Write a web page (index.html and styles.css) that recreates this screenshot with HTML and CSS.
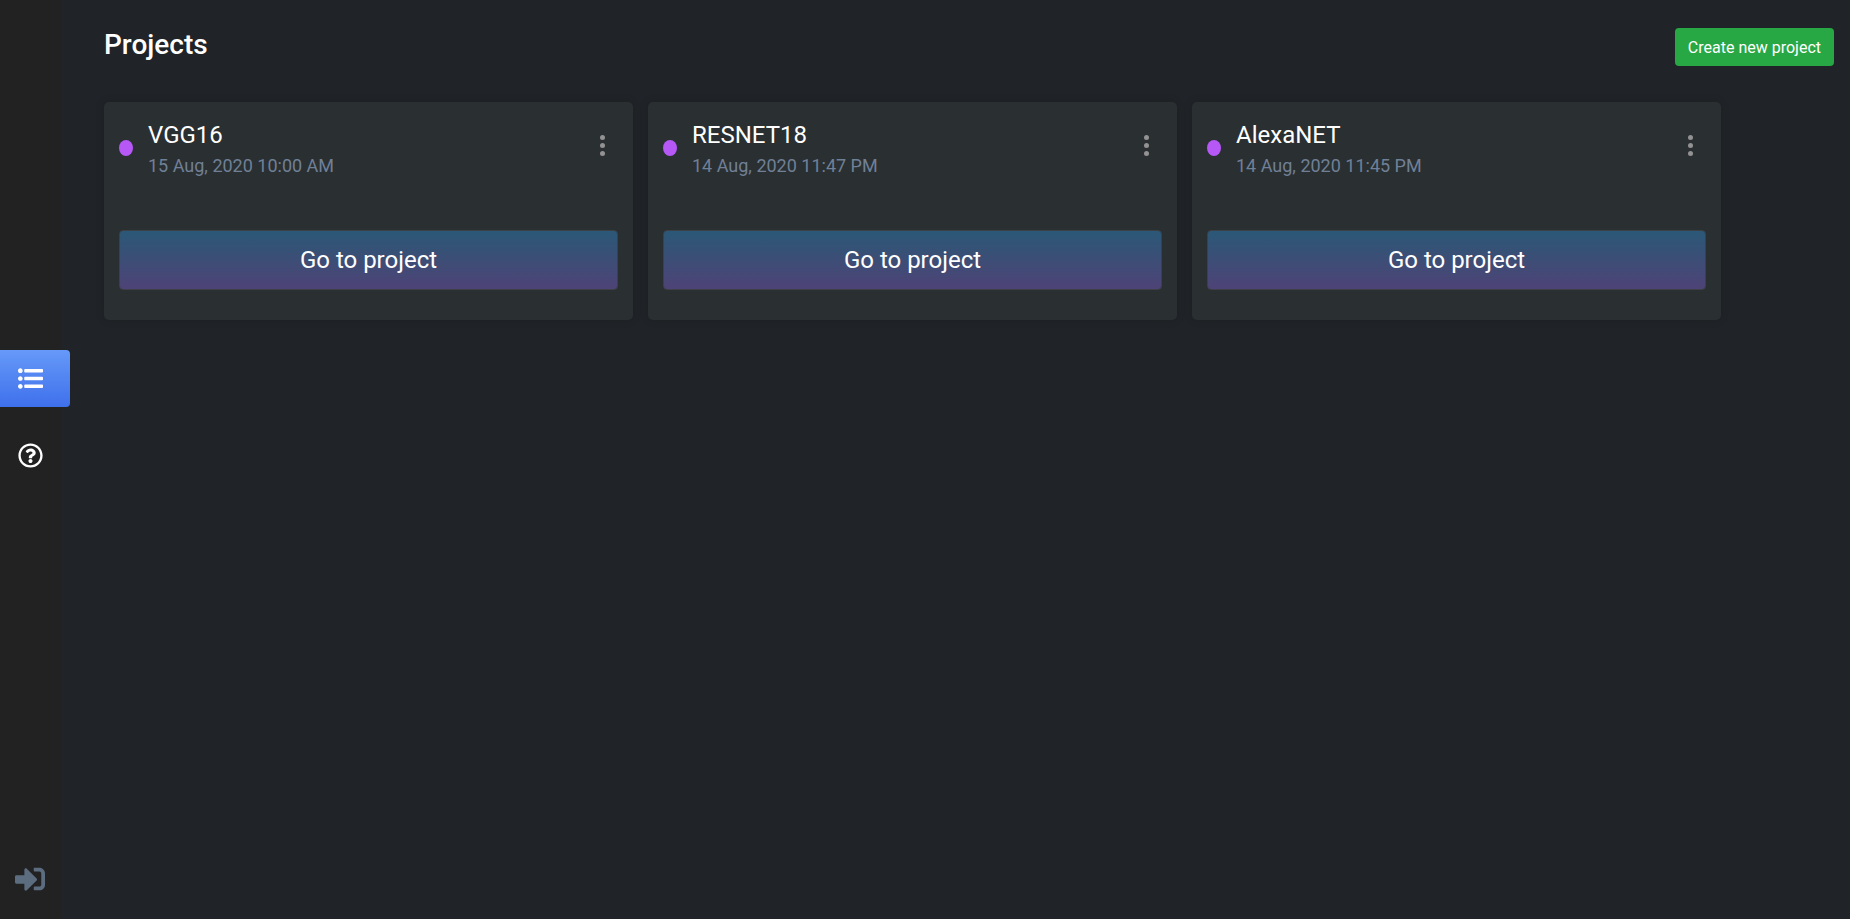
FILE: index.html
```html
<!DOCTYPE html>
<html lang="en">
<head>
<meta charset="utf-8">
<meta name="viewport" content="width=device-width, initial-scale=1">
<title>Projects</title>
<link rel="stylesheet" href="styles.css">
</head>
<body>
<div class="app">
  <nav class="sidebar" aria-label="Main">
    <div class="sidebar-links">
      <a class="nav-link nav-link-active" href="#projects" aria-label="Projects">
        <svg class="icon" viewBox="0 0 512 512" aria-hidden="true"><path d="M96 96c0 26.510-21.490 48-48 48S0 122.510 0 96s21.490-48 48-48 48 21.490 48 48zM48 208c-26.510 0-48 21.490-48 48s21.490 48 48 48 48-21.490 48-48-21.490-48-48-48zm0 160c-26.510 0-48 21.490-48 48s21.490 48 48 48 48-21.490 48-48-21.490-48-48-48zm96-236h352c8.837 0 16-7.163 16-16V76c0-8.837-7.163-16-16-16H144c-8.837 0-16 7.163-16 16v40c0 8.837 7.163 16 16 16zm0 160h352c8.837 0 16-7.163 16-16v-40c0-8.837-7.163-16-16-16H144c-8.837 0-16 7.163-16 16v40c0 8.837 7.163 16 16 16zm0 160h352c8.837 0 16-7.163 16-16v-40c0-8.837-7.163-16-16-16H144c-8.837 0-16 7.163-16 16v40c0 8.837 7.163 16 16 16z"/></svg>
      </a>
      <a class="nav-link" href="#help" aria-label="Help">
        <svg class="icon" viewBox="0 0 512 512" aria-hidden="true"><path d="M256 8C119.043 8 8 119.083 8 256c0 136.997 111.043 248 248 248s248-111.003 248-248C504 119.083 392.957 8 256 8zm0 448c-110.532 0-200-89.431-200-200 0-110.495 89.472-200 200-200 110.491 0 200 89.471 200 200 0 110.530-89.431 200-200 200zm107.244-255.200c0 67.052-72.421 68.084-72.421 92.863V300c0 6.627-5.373 12-12 12h-45.647c-6.627 0-12-5.373-12-12v-8.659c0-35.745 27.100-50.034 47.579-61.516 17.561-9.845 28.324-16.541 28.324-29.579 0-17.246-21.999-28.693-39.784-28.693-23.189 0-33.894 10.977-48.942 29.969-4.057 5.120-11.460 6.071-16.666 2.124l-27.824-21.098c-5.107-3.872-6.251-11.066-2.644-16.363C184.846 131.491 214.940 112 261.794 112c49.071 0 101.450 38.304 101.450 88.800zM298 368c0 23.159-18.841 42-42 42s-42-18.841-42-42 18.841-42 42-42 42 18.841 42 42z"/></svg>
      </a>
    </div>
    <a class="logout" href="#logout" aria-label="Log out">
      <svg class="icon icon-large" viewBox="0 0 512 512" aria-hidden="true"><path d="M416 448h-84c-6.600 0-12-5.400-12-12v-40c0-6.600 5.400-12 12-12h84c17.700 0 32-14.300 32-32V160c0-17.700-14.300-32-32-32h-84c-6.600 0-12-5.400-12-12V76c0-6.600 5.400-12 12-12h84c53 0 96 43 96 96v192c0 53-43 96-96 96zm-47-201L201 79c-15-15-41-4.500-41 17v96H24c-13.300 0-24 10.700-24 24v96c0 13.300 10.700 24 24 24h136v96c0 21.500 26 32 41 17l168-168c9.300-9.400 9.300-24.600 0-34z"/></svg>
    </a>
  </nav>
  <main class="content">
    <header class="page-header">
      <h1 class="page-title">Projects</h1>
      <button class="create-button" type="button">Create new project</button>
    </header>
    <section class="projects" aria-label="Project list">
      <article class="card">
        <div class="card-header">
          <span class="status-dot"></span>
          <div class="card-text">
            <h2 class="card-title">VGG16</h2>
            <p class="card-date">15 Aug, 2020 10:00 AM</p>
          </div>
          <button class="menu-button" type="button" aria-label="VGG16 options"><span class="menu-dot"></span><span class="menu-dot"></span><span class="menu-dot"></span></button>
        </div>
        <button class="open-button" type="button">Go to project</button>
      </article>
      <article class="card">
        <div class="card-header">
          <span class="status-dot"></span>
          <div class="card-text">
            <h2 class="card-title">RESNET18</h2>
            <p class="card-date">14 Aug, 2020 11:47 PM</p>
          </div>
          <button class="menu-button" type="button" aria-label="RESNET18 options"><span class="menu-dot"></span><span class="menu-dot"></span><span class="menu-dot"></span></button>
        </div>
        <button class="open-button" type="button">Go to project</button>
      </article>
      <article class="card">
        <div class="card-header">
          <span class="status-dot"></span>
          <div class="card-text">
            <h2 class="card-title">AlexaNET</h2>
            <p class="card-date">14 Aug, 2020 11:45 PM</p>
          </div>
          <button class="menu-button" type="button" aria-label="AlexaNET options"><span class="menu-dot"></span><span class="menu-dot"></span><span class="menu-dot"></span></button>
        </div>
        <button class="open-button" type="button">Go to project</button>
      </article>
    </section>
  </main>
</div>
</body>
</html>
```

FILE: styles.css
```css
* {
  box-sizing: border-box;
}

body {
  margin: 0;
  background: #202428;
  color: #fff;
  font-family: Roboto, "Liberation Sans", sans-serif;
  font-size: 16px;
}

button {
  font-family: inherit;
  color: inherit;
  cursor: pointer;
}

h1,
h2,
p {
  margin: 0;
}

.app {
  display: flex;
  min-height: 100vh;
}

.sidebar {
  display: flex;
  flex-direction: column;
  flex: none;
  width: 61px;
  background: #222;
}

.sidebar-links {
  display: flex;
  flex: 1;
  flex-direction: column;
  justify-content: center;
  gap: 20px;
  padding-bottom: 30px;
}

.nav-link {
  display: flex;
  align-items: center;
  width: 70px;
  height: 57px;
  padding-left: 18px;
  border-radius: 0 4px 4px 0;
  color: #fff;
}

.nav-link-active {
  background: linear-gradient(#6699f8, #3f70ec);
}

.logout {
  display: flex;
  padding: 0 15px 25px;
  color: #5c6d80;
}

.icon {
  width: 25px;
  height: 25px;
  fill: currentColor;
}

.icon-large {
  width: 30px;
  height: 30px;
}

.content {
  flex: 1;
  min-width: 0;
  padding: 28px 16px 28px 43px;
}

.page-header {
  display: flex;
  align-items: flex-start;
  justify-content: space-between;
  margin-bottom: 36px;
}

.page-title {
  font-size: 28px;
  font-weight: 500;
  line-height: 34px;
}

.create-button {
  height: 38px;
  padding: 1px 13px 0;
  border: 0;
  border-radius: 4px;
  background: #28a745;
  font-size: 16px;
  line-height: 24px;
}

.projects {
  display: grid;
  grid-template-columns: repeat(auto-fit, minmax(360px, 1fr));
  gap: 15px;
  max-width: 1617px;
}

.card {
  padding: 15px 15px 30px;
  border-radius: 5px;
  background: #2a2f32;
  box-shadow: 0 0 8px rgba(0, 0, 0, 0.15);
}

.card-header {
  display: flex;
  align-items: center;
  margin-bottom: 52px;
}

.status-dot {
  width: 14px;
  height: 16px;
  margin-right: 15px;
  border-radius: 50%;
  background: #b558f6;
}

.card-text {
  flex: 1;
}

.card-title {
  font-size: 24px;
  font-weight: 400;
  line-height: 36px;
}

.card-date {
  color: #708096;
  font-size: 18px;
  line-height: 25px;
}

.menu-button {
  display: flex;
  flex-direction: column;
  align-items: center;
  gap: 3px;
  margin: 0 8px 5px;
  padding: 5px;
  border: 0;
  background: transparent;
}

.menu-dot {
  width: 5px;
  height: 5px;
  border-radius: 50%;
  background: #929292;
}

.open-button {
  display: block;
  width: 100%;
  height: 60px;
  border: 1px solid #3c4047;
  border-radius: 4px;
  background: linear-gradient(#2b5876, #4e4376);
  font-size: 24px;
}
```
